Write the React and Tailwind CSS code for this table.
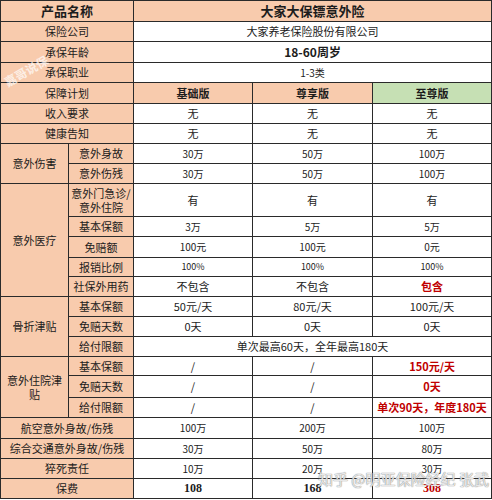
import React from "react";

const P = "bg-[#f8cbad]";
const G = "bg-[#c6e0b4]";
const W = "bg-white";
const td = "border border-[#2a2a2a] text-center align-middle p-0 leading-[1.15]";

function Row({ h, children }) {
  return <tr style={{ height: h }}>{children}</tr>;
}

export default function App() {
  const red = "text-[#c00000] font-bold";
  return (
    <div className="relative w-[492px] h-[500px] bg-white overflow-hidden" style={{ fontFamily: '"Noto Sans CJK SC", "Noto Sans", sans-serif' }}>
      <table className="table-fixed border-collapse w-[491px] text-[11px] text-[#1c1c1c]">
        <colgroup>
          <col style={{ width: 68 }} />
          <col style={{ width: 65 }} />
          <col style={{ width: 119 }} />
          <col style={{ width: 120 }} />
          <col style={{ width: 119 }} />
        </colgroup>
        <tbody>
          <Row h={21}>
            <td colSpan={2} className={`${td} ${P} text-[13px] font-bold`}>产品名称</td>
            <td colSpan={3} className={`${td} ${P} text-[13px] font-bold`}>大家大保镖意外险</td>
          </Row>
          <Row h={20}>
            <td colSpan={2} className={`${td} ${P}`}>保险公司</td>
            <td colSpan={3} className={`${td} ${W}`}>大家养老保险股份有限公司</td>
          </Row>
          <Row h={21}>
            <td colSpan={2} className={`${td} ${P}`}>承保年龄</td>
            <td colSpan={3} className={`${td} ${W} font-bold text-[12px]`}>18-60周岁</td>
          </Row>
          <Row h={20}>
            <td colSpan={2} className={`${td} ${P}`}>承保职业</td>
            <td colSpan={3} className={`${td} ${W} text-[10px]`}>1-3类</td>
          </Row>
          <Row h={21}>
            <td colSpan={2} className={`${td} ${P}`}>保障计划</td>
            <td className={`${td} ${P} font-bold`}>基础版</td>
            <td className={`${td} ${P} font-bold`}>尊享版</td>
            <td className={`${td} ${G} font-bold`}>至尊版</td>
          </Row>
          <Row h={20}>
            <td colSpan={2} className={`${td} ${P}`}>收入要求</td>
            <td className={`${td} ${W}`}>无</td>
            <td className={`${td} ${W}`}>无</td>
            <td className={`${td} ${W}`}>无</td>
          </Row>
          <Row h={20}>
            <td colSpan={2} className={`${td} ${P}`}>健康告知</td>
            <td className={`${td} ${W}`}>无</td>
            <td className={`${td} ${W}`}>无</td>
            <td className={`${td} ${W}`}>无</td>
          </Row>
          <Row h={20}>
            <td rowSpan={2} className={`${td} ${P}`}>意外伤害</td>
            <td className={`${td} ${P}`}>意外身故</td>
            <td className={`${td} ${W} text-[10px]`}>30万</td>
            <td className={`${td} ${W} text-[10px]`}>50万</td>
            <td className={`${td} ${W} text-[10px]`}>100万</td>
          </Row>
          <Row h={20}>
            <td className={`${td} ${P}`}>意外伤残</td>
            <td className={`${td} ${W} text-[10px]`}>30万</td>
            <td className={`${td} ${W} text-[10px]`}>50万</td>
            <td className={`${td} ${W} text-[10px]`}>100万</td>
          </Row>
          <Row h={33}>
            <td rowSpan={5} className={`${td} ${P}`}>意外医疗</td>
            <td className={`${td} ${P} !leading-[1.3]`}>意外门急诊/<br />意外住院</td>
            <td className={`${td} ${W}`}>有</td>
            <td className={`${td} ${W}`}>有</td>
            <td className={`${td} ${W}`}>有</td>
          </Row>
          <Row h={20}>
            <td className={`${td} ${P}`}>基本保额</td>
            <td className={`${td} ${W} text-[10px]`}>3万</td>
            <td className={`${td} ${W} text-[10px]`}>5万</td>
            <td className={`${td} ${W} text-[10px]`}>5万</td>
          </Row>
          <Row h={21}>
            <td className={`${td} ${P}`}>免赔额</td>
            <td className={`${td} ${W} text-[10px]`}>100元</td>
            <td className={`${td} ${W} text-[10px]`}>100元</td>
            <td className={`${td} ${W} text-[10px]`}>0元</td>
          </Row>
          <Row h={19}>
            <td className={`${td} ${P}`}>报销比例</td>
            <td className={`${td} ${W} text-[9px]`}>100%</td>
            <td className={`${td} ${W} text-[9px]`}>100%</td>
            <td className={`${td} ${W} text-[9px]`}>100%</td>
          </Row>
          <Row h={20}>
            <td className={`${td} ${P}`}>社保外用药</td>
            <td className={`${td} ${W}`}>不包含</td>
            <td className={`${td} ${W}`}>不包含</td>
            <td className={`${td} ${W} ${red}`}>包含</td>
          </Row>
          <Row h={20}>
            <td rowSpan={3} className={`${td} ${P}`}>骨折津贴</td>
            <td className={`${td} ${P}`}>基本保额</td>
            <td className={`${td} ${W}`}>50元/天</td>
            <td className={`${td} ${W}`}>80元/天</td>
            <td className={`${td} ${W}`}>100元/天</td>
          </Row>
          <Row h={20}>
            <td className={`${td} ${P}`}>免赔天数</td>
            <td className={`${td} ${W}`}>0天</td>
            <td className={`${td} ${W}`}>0天</td>
            <td className={`${td} ${W}`}>0天</td>
          </Row>
          <Row h={20}>
            <td className={`${td} ${P}`}>给付限额</td>
            <td colSpan={3} className={`${td} ${W}`}>单次最高60天，全年最高180天</td>
          </Row>
          <Row h={19}>
            <td rowSpan={3} className={`${td} ${P} !leading-[1.3]`}>意外住院津<br />贴</td>
            <td className={`${td} ${P}`}>基本保额</td>
            <td className={`${td} ${W}`}>/</td>
            <td className={`${td} ${W}`}>/</td>
            <td className={`${td} ${W} ${red}`}>150元/天</td>
          </Row>
          <Row h={22}>
            <td className={`${td} ${P}`}>免赔天数</td>
            <td className={`${td} ${W}`}>/</td>
            <td className={`${td} ${W}`}>/</td>
            <td className={`${td} ${W} ${red}`}>0天</td>
          </Row>
          <Row h={20}>
            <td className={`${td} ${P}`}>给付限额</td>
            <td className={`${td} ${W}`}>/</td>
            <td className={`${td} ${W}`}>/</td>
            <td className={`${td} ${W} ${red} whitespace-nowrap`}>单次90天，年度180天</td>
          </Row>
          <Row h={21}>
            <td colSpan={2} className={`${td} ${P}`}>航空意外身故/伤残</td>
            <td className={`${td} ${W} text-[10px]`}>100万</td>
            <td className={`${td} ${W} text-[10px]`}>200万</td>
            <td className={`${td} ${W} text-[10px]`}>100万</td>
          </Row>
          <Row h={20}>
            <td colSpan={2} className={`${td} ${P}`}>综合交通意外身故/伤残</td>
            <td className={`${td} ${W} text-[10px]`}>30万</td>
            <td className={`${td} ${W} text-[10px]`}>50万</td>
            <td className={`${td} ${W} text-[10px]`}>80万</td>
          </Row>
          <Row h={20}>
            <td colSpan={2} className={`${td} ${P}`}>猝死责任</td>
            <td className={`${td} ${W} text-[10px]`}>10万</td>
            <td className={`${td} ${W} text-[10px]`}>20万</td>
            <td className={`${td} ${W} text-[10px]`}>30万</td>
          </Row>
          <Row h={20}>
            <td colSpan={2} className={`${td} ${P}`}>保费</td>
            <td className={`${td} ${W} font-bold text-[12px]`} style={{ fontFamily: '"Liberation Serif", serif' }}>108</td>
            <td className={`${td} ${W} font-bold text-[12px]`} style={{ fontFamily: '"Liberation Serif", serif' }}>168</td>
            <td className={`${td} ${W} font-bold text-[12px] text-[#c00000]`} style={{ fontFamily: '"Liberation Serif", serif' }}>308</td>
          </Row>
        </tbody>
      </table>
      <div
        className="absolute left-[318px] top-[468px] text-[15px] whitespace-nowrap text-white/80 pointer-events-none"
        style={{ textShadow: "0 0 1px #8a8a8a, 0 0 1px #8a8a8a" }}
      >
        知乎 @明亚保险经纪 张武
      </div>
      <div
        className="absolute left-[2px] top-[62px] text-[12px] font-bold text-white/70 -rotate-[30deg] pointer-events-none"
      >
        嘉哥说保
      </div>
    </div>
  );
}
